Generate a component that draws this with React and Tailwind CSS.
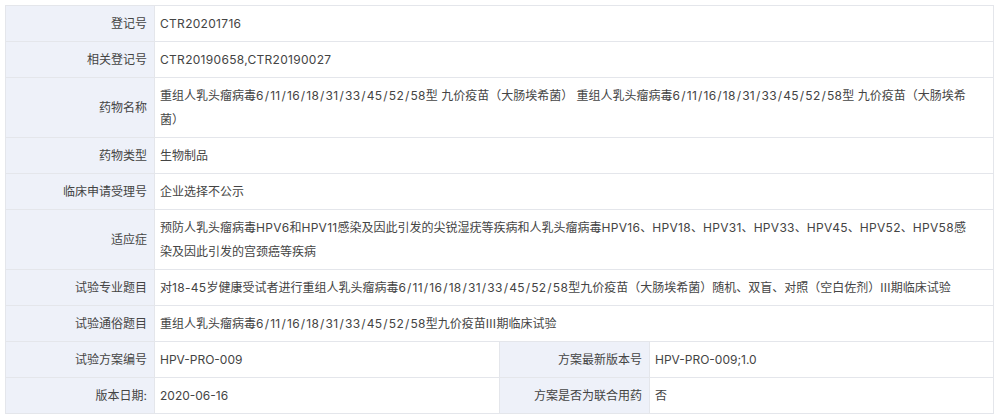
const rows = [
  { label: "登记号", value: "CTR20201716" },
  { label: "相关登记号", value: "CTR20190658,CTR20190027" },
  {
    label: "药物名称",
    value:
      "重组人乳头瘤病毒6/11/16/18/31/33/45/52/58型 九价疫苗（大肠埃希菌） 重组人乳头瘤病毒6/11/16/18/31/33/45/52/58型 九价疫苗（大肠埃希菌）",
  },
  { label: "药物类型", value: "生物制品" },
  { label: "临床申请受理号", value: "企业选择不公示" },
  {
    label: "适应症",
    value:
      "预防人乳头瘤病毒HPV6和HPV11感染及因此引发的尖锐湿疣等疾病和人乳头瘤病毒HPV16、HPV18、HPV31、HPV33、HPV45、HPV52、HPV58感染及因此引发的宫颈癌等疾病",
  },
  {
    label: "试验专业题目",
    value:
      "对18-45岁健康受试者进行重组人乳头瘤病毒6/11/16/18/31/33/45/52/58型九价疫苗（大肠埃希菌）随机、双盲、对照（空白佐剂）III期临床试验",
  },
  {
    label: "试验通俗题目",
    value: "重组人乳头瘤病毒6/11/16/18/31/33/45/52/58型九价疫苗III期临床试验",
  },
];

const pairs = [
  ["试验方案编号", "HPV-PRO-009", "方案最新版本号", "HPV-PRO-009;1.0"],
  ["版本日期:", "2020-06-16", "方案是否为联合用药", "否"],
];

const th =
  "border border-[#e4e6eb] bg-[#eef1f9] text-right align-middle pr-[7px] pl-2 pt-[6px] pb-[5px] font-normal text-[#444]";
const td =
  "border border-[#e4e6eb] bg-white text-left align-middle pl-[5px] pr-[20px] pt-[6px] pb-[5px] text-[#444]";

// latin runs in the source font are a bit wider than Inter, slashes much wider
const Text = ({ value }) => {
  const out = [];
  value.split(/([\x21-\x7e]+)/).forEach((chunk, i) => {
    if (!chunk) return;
    if (!/^[\x21-\x7e]+$/.test(chunk)) {
      out.push(chunk);
      return;
    }
    chunk.split(/(\/)/).forEach((s, j) => {
      if (!s) return;
      out.push(
        <span
          key={i + "-" + j}
          className={s === "/" ? "tracking-[0.3px] mx-[0.9px]" : "tracking-[0.3px]"}
        >
          {s}
        </span>
      );
    });
  });
  return <>{out}</>;
};

export default function App() {
  return (
    <div
      className="bg-white pt-[5px] pl-[5px] w-[1000px] h-[419px]"
      style={{ fontFamily: 'Inter, "Noto Sans CJK SC", sans-serif' }}
    >
      <table className="border-collapse table-fixed w-[988px] text-[12px] leading-[24px]">
        <colgroup>
          <col className="w-[149px]" />
          <col className="w-[345px]" />
          <col className="w-[150px]" />
          <col className="w-[344px]" />
        </colgroup>
        <tbody>
          {rows.map((r) => (
            <tr key={r.label}>
              <th className={th}>{r.label}</th>
              <td className={td} colSpan={3}>
                <Text value={r.value} />
              </td>
            </tr>
          ))}
          {pairs.map((p) => (
            <tr key={p[0]}>
              <th className={th}>{p[0]}</th>
              <td className={td}>{p[1]}</td>
              <th className={th}>{p[2]}</th>
              <td className={td}>{p[3]}</td>
            </tr>
          ))}
        </tbody>
      </table>
    </div>
  );
}
